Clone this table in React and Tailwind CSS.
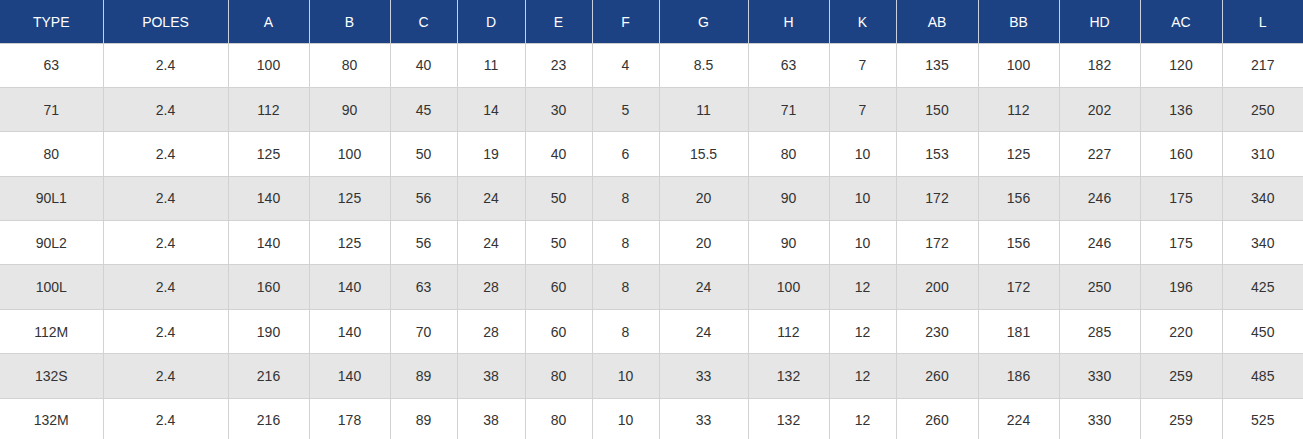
const headers = ["TYPE", "POLES", "A", "B", "C", "D", "E", "F", "G", "H", "K", "AB", "BB", "HD", "AC", "L"];

// widths per the line positions in the picture
const widths = [103, 125, 81, 81, 67, 68, 67, 67, 89, 81, 67, 82, 81, 81, 82, 81];

const rows = [
  ["63", "2.4", "100", "80", "40", "11", "23", "4", "8.5", "63", "7", "135", "100", "182", "120", "217"],
  ["71", "2.4", "112", "90", "45", "14", "30", "5", "11", "71", "7", "150", "112", "202", "136", "250"],
  ["80", "2.4", "125", "100", "50", "19", "40", "6", "15.5", "80", "10", "153", "125", "227", "160", "310"],
  ["90L1", "2.4", "140", "125", "56", "24", "50", "8", "20", "90", "10", "172", "156", "246", "175", "340"],
  ["90L2", "2.4", "140", "125", "56", "24", "50", "8", "20", "90", "10", "172", "156", "246", "175", "340"],
  ["100L", "2.4", "160", "140", "63", "28", "60", "8", "24", "100", "12", "200", "172", "250", "196", "425"],
  ["112M", "2.4", "190", "140", "70", "28", "60", "8", "24", "112", "12", "230", "181", "285", "220", "450"],
  ["132S", "2.4", "216", "140", "89", "38", "80", "10", "33", "132", "12", "260", "186", "330", "259", "485"],
  ["132M", "2.4", "216", "178", "89", "38", "80", "10", "33", "132", "12", "260", "224", "330", "259", "525"],
];

const App = () => {
  return (
    <div className="w-[1303px] bg-white font-['Liberation_Sans',Arial,sans-serif] text-[14px] text-[#333]">
      <table className="w-[1303px] table-fixed border-collapse">
        <colgroup>
          {widths.map((w, i) => (
            <col key={i} style={{ width: w }} />
          ))}
        </colgroup>
        <thead>
          <tr className="h-[43px] bg-[#1d4284] text-white">
            {headers.map((h, i) => (
              <th
                key={h}
                className={`p-0 pt-[2px] text-center font-normal border-b border-[#ccc] ${
                  i > 0 ? "border-l border-l-[#c9d1e0]" : ""
                }`}
              >
                {h}
              </th>
            ))}
          </tr>
        </thead>
        <tbody>
          {rows.map((row, r) => (
            <tr
              key={row[0]}
              className={`h-[44.4px] ${r % 2 === 1 ? "bg-[#e6e6e6]" : "bg-white"}`}
            >
              {row.map((cell, i) => (
                <td
                  key={i}
                  className={`p-0 pt-[1px] text-center border-b border-[#d2d2d2] ${
                    i > 0 ? "border-l" : ""
                  }`}
                >
                  {cell}
                </td>
              ))}
            </tr>
          ))}
        </tbody>
      </table>
    </div>
  );
};

export default App;
